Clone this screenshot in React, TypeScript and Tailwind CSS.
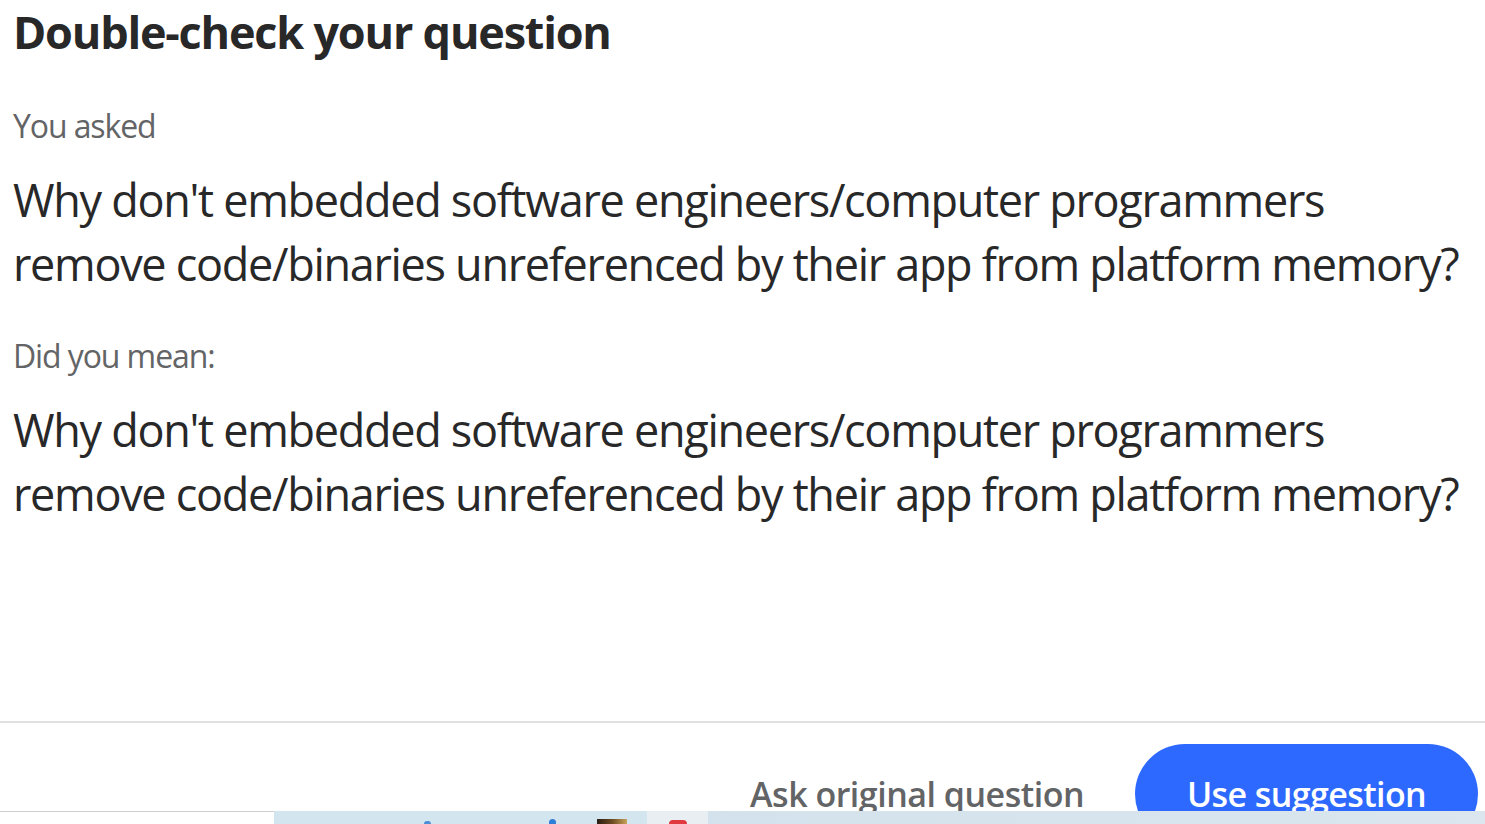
import React from "react";

const QUESTION = [
  "Why don't embedded software engineers/computer programmers",
  "remove code/binaries unreferenced by their app from platform memory?",
];

const QuestionText = ({ lines }: { lines: string[] }) => (
  <p className="mt-[22px] whitespace-nowrap text-[45px] leading-[64px] tracking-[-1.3px] text-[#282829]">
    {lines[0]}
    <br />
    {lines[1]}
  </p>
);

const Label = ({ children, className }: { children: React.ReactNode; className: string }) => (
  <div className={`text-[32px] leading-[40px] tracking-[-1.1px] text-[#636466] ${className}`}>{children}</div>
);

const Taskbar = () => (
  <div className="flex h-[13px] shrink-0">
    <div className="w-[274px] border-t border-[#cfcfcf] bg-white" />
    <div className="flex w-[373px] bg-[#d3e6f0]">
      {/* cut-off taskbar icons */}
      <div className="ml-[150px] mt-[10px] h-[3px] w-[7px] rounded-t-sm bg-[#4a8fd6]" />
      <div className="ml-[118px] mt-[8px] h-[5px] w-[7px] rounded-t-full bg-[#2f7ed8]" />
      <div className="ml-[41px] mt-[8px] h-[5px] w-[30px] bg-gradient-to-r from-[#2b1d12] via-[#6b4a22] to-[#c9a35a]" />
    </div>
    <div className="flex w-[61px] justify-center bg-[#e8eef2]">
      <div className="mt-[9px] h-[4px] w-[18px] rounded-t-full bg-[#e0393e]" />
    </div>
    <div className="flex-1 bg-gradient-to-r from-[#d3e2ec] to-[#dbe6ee]" />
  </div>
);

export default function App() {
  return (
    <div className="flex h-[824px] w-full flex-col overflow-hidden bg-white font-['Open_Sans',sans-serif]">
      <div className="flex h-[811px] shrink-0 flex-col overflow-hidden">
        {/* Body */}
        <div className="flex-1 px-[13px] pt-[5px]">
          <h1 className="text-[45px] font-bold leading-[54px] tracking-[-1.2px] text-[#282829]">
            Double-check your question
          </h1>
          <Label className="mt-[47px]">You asked</Label>
          <QuestionText lines={QUESTION} />
          <Label className="mt-[40px]">Did you mean:</Label>
          <QuestionText lines={QUESTION} />
        </div>

        <div className="h-[2px] shrink-0 bg-[#dee0e1]" />

        {/* Footer */}
        <div className="flex h-[88px] shrink-0 items-start justify-end pr-[7px] pt-[21px]">
          <button className="mr-[51px] flex h-[100px] items-center text-[34px] font-semibold tracking-[-0.5px] text-[#636466]">
            Ask original question
          </button>
          <button className="flex h-[100px] w-[343px] shrink-0 items-center justify-center rounded-full bg-[#2e69ff] text-[34px] font-semibold tracking-[-0.6px] text-white">
            Use suggestion
          </button>
        </div>
      </div>
      <Taskbar />
    </div>
  );
}
